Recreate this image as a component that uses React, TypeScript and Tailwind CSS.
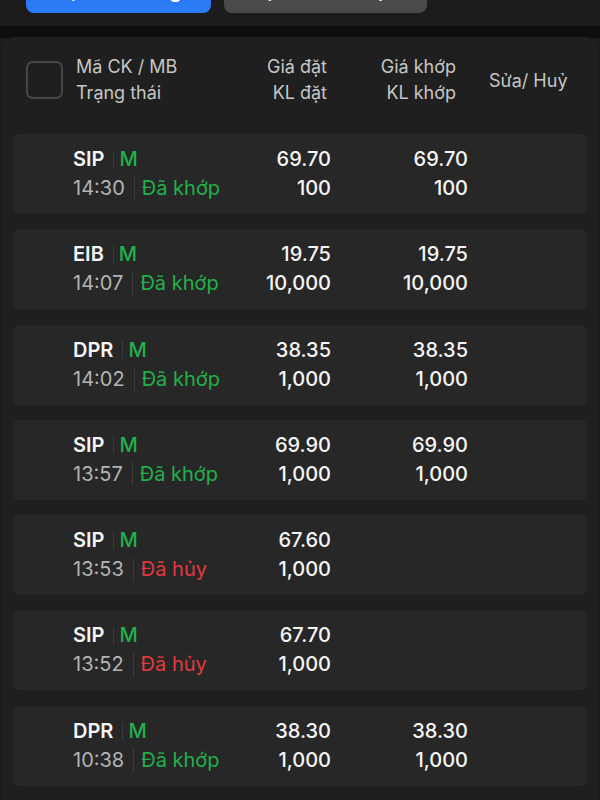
import React from 'react';

interface Order {
  symbol: string;
  side: string;
  time: string;
  status: 'filled' | 'cancelled';
  price: string;
  qty: string;
  matchPrice?: string;
  matchQty?: string;
}

const orders: Order[] = [
  { symbol: 'SIP', side: 'M', time: '14:30', status: 'filled', price: '69.70', qty: '100', matchPrice: '69.70', matchQty: '100' },
  { symbol: 'EIB', side: 'M', time: '14:07', status: 'filled', price: '19.75', qty: '10,000', matchPrice: '19.75', matchQty: '10,000' },
  { symbol: 'DPR', side: 'M', time: '14:02', status: 'filled', price: '38.35', qty: '1,000', matchPrice: '38.35', matchQty: '1,000' },
  { symbol: 'SIP', side: 'M', time: '13:57', status: 'filled', price: '69.90', qty: '1,000', matchPrice: '69.90', matchQty: '1,000' },
  { symbol: 'SIP', side: 'M', time: '13:53', status: 'cancelled', price: '67.60', qty: '1,000' },
  { symbol: 'SIP', side: 'M', time: '13:52', status: 'cancelled', price: '67.70', qty: '1,000' },
  { symbol: 'DPR', side: 'M', time: '10:38', status: 'filled', price: '38.30', qty: '1,000', matchPrice: '38.30', matchQty: '1,000' },
];

const OrderRow: React.FC<{ order: Order }> = ({ order }) => {
  const filled = order.status === 'filled';
  return (
    <div className="h-[80px] rounded-md bg-[#272727] flex items-center pl-[60px] text-[20px] leading-[29px]">
      {/* Symbol / side, time / status */}
      <div className="w-[200px] flex flex-col">
        <div className="flex items-center">
          <span className="font-semibold text-[#f5f5f5]">{order.symbol}</span>
          <span className="ml-[9px] w-px h-[18px] bg-[#3b3b3b]"></span>
          <span className="ml-[5px] font-medium text-[#22b04b]">{order.side}</span>
        </div>
        <div className="flex items-center">
          <span className="text-[#b4b4b4]">{order.time}</span>
          <span className="ml-[9px] w-px h-[24px] bg-[#3b3b3b]"></span>
          <span className={`ml-[7px] ${filled ? 'text-[#22b04b]' : 'text-[#e03a3e]'}`}>
            {filled ? 'Đã khớp' : 'Đã hủy'}
          </span>
        </div>
      </div>

      {/* Order price / qty */}
      <div className="w-[58px] flex flex-col items-end font-medium text-[#f5f5f5]">
        <span>{order.price}</span>
        <span>{order.qty}</span>
      </div>

      {/* Matched price / qty */}
      <div className="w-[137px] flex flex-col items-end font-medium text-[#f5f5f5]">
        <span>{order.matchPrice ?? '\u00a0'}</span>
        <span>{order.matchQty ?? '\u00a0'}</span>
      </div>
    </div>
  );
};

export default function App() {
  return (
    <div className="w-[600px] h-[800px] overflow-hidden bg-[#1c1c1c] font-['Inter',sans-serif]">
      {/* Tabs, scrolled partly out of view */}
      <div className="-mt-[33px] h-[59px] flex items-start gap-[13px] pl-[26px]">
        <button
          type="button"
          className="w-[185px] h-[46px] rounded-lg bg-[#2c7bf6] text-white text-[21px] font-semibold flex items-center justify-center"
        >
          Lệnh thường
        </button>
        <button
          type="button"
          className="w-[203px] h-[46px] rounded-lg bg-[#4a4a4a] text-white text-[21px] font-semibold flex items-center justify-center"
        >
          Lệnh điều kiện
        </button>
      </div>

      <div className="h-[12px] bg-[#0e0e0e]"></div>

      {/* Order book panel */}
      <div className="-mt-px mx-[2px] rounded-t-[14px] bg-[#1f1f1f] h-[800px] px-[11px]">
        {/* Header */}
        <div className="h-[82px] pt-[4px] flex items-center pl-[13px] text-[18px] leading-[26px] text-[#c6c6c6]">
          <div className="w-[37px] h-[38px] rounded-[7px] border-2 border-[#474747]"></div>
          <div className="ml-[13px] w-[180px] flex flex-col">
            <span>Mã CK / MB</span>
            <span>Trạng thái</span>
          </div>
          <div className="w-[71px] flex flex-col items-end">
            <span>Giá đặt</span>
            <span>KL đặt</span>
          </div>
          <div className="w-[129px] flex flex-col items-end">
            <span>Giá khớp</span>
            <span>KL khớp</span>
          </div>
          <div className="ml-[33px] mt-[2px]">Sửa/ Huỷ</div>
        </div>

        {/* Orders */}
        <div className="mt-[15px] flex flex-col gap-[15.3px]">
          {orders.map((o, i) => (
            <OrderRow key={i} order={o} />
          ))}
        </div>
      </div>
    </div>
  );
}
